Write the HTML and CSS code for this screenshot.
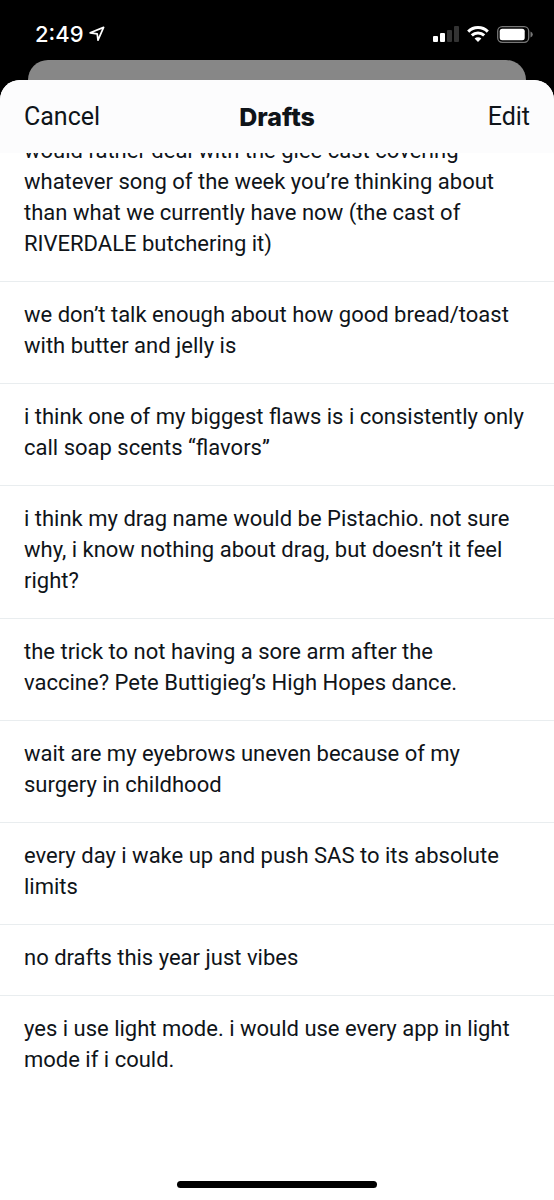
FILE: index.html
```html
<!DOCTYPE html>
<html lang="en">
<head>
  <meta charset="UTF-8">
  <meta name="viewport" content="width=device-width, initial-scale=1">
  <title>Drafts</title>
  <link rel="stylesheet" href="styles.css">
</head>
<body>
  <div class="status-bar">
    <div class="status-left">
      <span class="time">2:49</span>
      <svg class="location" width="16" height="16" viewBox="0 0 16 16" fill="none" stroke="white" stroke-width="1.7" stroke-linejoin="round">
        <path d="M1.2 6.8 L14.6 1.4 L9 14.2 L8.2 7.8 Z"/>
      </svg>
    </div>
    <div class="status-right">
      <svg width="26" height="16" viewBox="0 0 26 16" fill="white">
        <rect x="0" y="10" width="5" height="6" rx="1"/>
        <rect x="7" y="7" width="5" height="9" rx="1"/>
        <rect x="14" y="4" width="5" height="12" rx="1" fill="#333"/>
        <rect x="21" y="0" width="5" height="16" rx="1" fill="#333"/>
      </svg>
      <svg width="22" height="16" viewBox="0 0 22 16" fill="none" stroke="white" stroke-width="3">
        <path d="M1.2 5.6 A14 14 0 0 1 20.8 5.6"/>
        <path d="M4.8 9.4 A8.9 8.9 0 0 1 17.2 9.4"/>
        <path d="M11 16 L7.6 12.6 A4.8 4.8 0 0 1 14.4 12.6 Z" fill="white" stroke="none"/>
      </svg>
      <svg width="36" height="17" viewBox="0 0 36 17">
        <rect x="0.7" y="0.7" width="31" height="15.6" rx="4.5" fill="none" stroke="#777" stroke-width="1.3"/>
        <rect x="2.7" y="2.7" width="25" height="11.6" rx="2.5" fill="white"/>
        <path d="M33.5 5.5 Q35.8 6.5 35.8 8.5 T33.5 11.5 Z" fill="#777"/>
      </svg>
    </div>
  </div>

  <div class="back-card"></div>

  <main class="sheet">
    <header class="nav">
      <button class="nav-btn" type="button">Cancel</button>
      <h1>Drafts</h1>
      <button class="nav-btn edit-btn" type="button">Edit</button>
    </header>

    <ul class="drafts">
      <li>would rather deal with the glee cast covering whatever song of the week you’re thinking about than what we currently have now (the cast of RIVERDALE butchering it)</li>
      <li>we don’t talk enough about how good bread/toast with butter and jelly is</li>
      <li>i think one of my biggest flaws is i consistently only call soap scents “flavors”</li>
      <li>i think my drag name would be Pistachio. not sure why, i know nothing about drag, but doesn’t it feel right?</li>
      <li>the trick to not having a sore arm after the<br>vaccine? Pete Buttigieg’s High Hopes dance.</li>
      <li>wait are my eyebrows uneven because of my surgery in childhood</li>
      <li>every day i wake up and push SAS to its absolute limits</li>
      <li>no drafts this year just vibes</li>
      <li>yes i use light mode. i would use every app in light mode if i could.</li>
    </ul>

    <div class="home-bar"></div>
  </main>
</body>
</html>
```

FILE: styles.css
```css
* {
  box-sizing: border-box;
}
body {
  margin: 0;
  min-height: 100vh;
  display: flex;
  flex-direction: column;
  background: black;
  color: #0f1419;
  font-family: Roboto, "Liberation Sans", sans-serif;
}
.status-bar {
  height: 60px;
  padding: 8px 21px 0 35px;
  display: flex;
  justify-content: space-between;
  align-items: center;
  color: white;
}
.status-left {
  display: flex;
  align-items: center;
  gap: 5px;
}
.time {
  font-family: Inter, sans-serif;
  font-size: 22px;
  font-weight: 500;
}
.status-right {
  display: flex;
  align-items: center;
  gap: 8px;
}
.back-card {
  height: 20px;
  margin: 0 28px;
  background: #878787;
  border-radius: 24px 24px 0 0;
}
.sheet {
  flex: 1;
  display: flex;
  flex-direction: column;
  background: white;
  border-radius: 20px 20px 0 0;
}
.nav {
  position: relative;
  z-index: 1;
  height: 73px;
  padding: 0 24px;
  display: grid;
  grid-template-columns: 1fr auto 1fr;
  align-items: center;
  background: #fcfcfd;
  border-radius: 20px 20px 0 0;
}
.nav h1 {
  margin: 0;
  font-family: Inter, sans-serif;
  font-size: 25px;
  font-weight: 800;
}
.nav-btn {
  justify-self: start;
  padding: 0;
  border: none;
  background: none;
  color: #0f1419;
  font-family: Roboto, "Liberation Sans", sans-serif;
  font-size: 25px;
}
.edit-btn {
  justify-self: end;
}
/* the list is scrolled a little way under the nav */
.drafts {
  list-style: none;
  margin: -35px 0 0;
  padding: 0;
}
.drafts li {
  padding: 17px 24px 22px;
  border-bottom: 1px solid #e9edef;
  font-size: 22px;
  line-height: 31px;
}
.drafts li:last-child {
  border-bottom: none;
}
.home-bar {
  width: 36%;
  height: 7px;
  margin: auto auto 12px;
  background: black;
  border-radius: 4px;
}
```
